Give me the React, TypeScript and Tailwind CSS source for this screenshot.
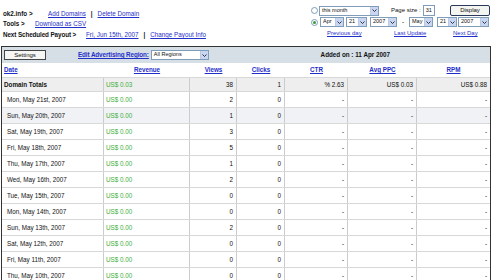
import React from "react";

const ROWS: [string, number][] = [
  ["Mon, May 21st, 2007", 2],
  ["Sun, May 20th, 2007", 1],
  ["Sat, May 19th, 2007", 3],
  ["Fri, May 18th, 2007", 5],
  ["Thu, May 17th, 2007", 1],
  ["Wed, May 16th, 2007", 2],
  ["Tue, May 15th, 2007", 0],
  ["Mon, May 14th, 2007", 0],
  ["Sun, May 13th, 2007", 2],
  ["Sat, May 12th, 2007", 0],
  ["Fri, May 11th, 2007", 0],
  ["Thu, May 10th, 2007", 0],
];

const COLS = "grid grid-cols-[102px_86px_47px_48px_63px_69px_73px]";

function Arrow() {
  return (
    <span className="flex h-full w-[8px] shrink-0 items-center justify-center border-l border-[#b9c9e6] bg-[#c8d6f2]">
      <svg width="5" height="3" viewBox="0 0 5 3">
        <path d="M0.5 0.5 L2.5 2.5 L4.5 0.5" stroke="#334" strokeWidth="1" fill="none" />
      </svg>
    </span>
  );
}

// fake XP-style dropdown
function Select({ label, className }: { label: string; className: string }) {
  return (
    <div className={`flex h-[10px] shrink-0 items-center justify-between overflow-hidden border border-[#7f9db9] bg-white pl-[2px] text-[5.5px] leading-none ${className}`}>
      <span>{label}</span>
      <Arrow />
    </div>
  );
}

function Radio({ checked }: { checked?: boolean }) {
  return (
    <span className="flex h-[7px] w-[7px] shrink-0 items-center justify-center rounded-full border border-[#7f9db9] bg-white">
      {checked && <span className="h-[3px] w-[3px] rounded-full bg-[#3a9a3a]" />}
    </span>
  );
}

function Link({ children, bold }: { children: React.ReactNode; bold?: boolean }) {
  return <span className={`text-[#1f2fc8] underline ${bold ? "font-bold" : ""}`}>{children}</span>;
}

export default function App() {
  return (
    <div className="h-[280px] w-[492px] overflow-hidden whitespace-nowrap bg-white font-['Liberation_Sans',Arial,sans-serif] text-[6.3px] text-[#111]">
      {/* Top bar */}
      <div className="flex h-[46px]">
        <div className="w-[311px] shrink-0 pl-[3px] pt-[9px] leading-[10px]">
          <div className="flex">
            <span className="w-[45px] shrink-0 font-bold">ok2.info &gt;</span>
            <Link>Add Domains</Link>
            <span className="px-[5px] font-bold">|</span>
            <Link>Delete Domain</Link>
          </div>
          <div className="flex">
            <span className="w-[32px] shrink-0 font-bold">Tools &gt;</span>
            <Link>Download as CSV</Link>
          </div>
          <div className="mt-px flex">
            <span className="w-[83px] shrink-0 font-bold tracking-[-0.1px]">Next Scheduled Payout &gt;</span>
            <Link>Fri, Jun 15th, 2007</Link>
            <span className="px-[5px] font-bold">|</span>
            <Link>Change Payout Info</Link>
          </div>
        </div>
        <div className="w-[179px] shrink-0 pt-[5px]">
          <div className="flex h-[11px] items-center">
            <Radio />
            <Select label="this month" className="ml-[1px] w-[60px]" />
            <span className="ml-[12px] shrink-0 text-[6px]">Page size :</span>
            <div className="ml-[2px] flex h-[11px] w-[12px] shrink-0 items-center border border-[#7f9db9] pl-[2px] text-[5.5px]">31</div>
            <div className="ml-auto flex h-[11px] w-[40px] shrink-0 items-center justify-center rounded-[2px] border border-[#2b3a5a] bg-[#f4f4f0] text-[6px]">Display</div>
          </div>
          <div className="mt-[1px] flex h-[10px] items-center">
            <Radio checked />
            <Select label="Apr" className="ml-[2px] w-[24px]" />
            <Select label="21" className="ml-[2px] w-[21px]" />
            <Select label="2007" className="ml-[3px] w-[27px]" />
            <span className="w-[12px] shrink-0 text-center">-</span>
            <Select label="May" className="w-[24px]" />
            <Select label="21" className="ml-[4px] w-[20px]" />
            <Select label="2007" className="ml-[1px] w-[31px]" />
          </div>
          <div className="mt-[2px] flex text-[6px] leading-[9px]">
            <span className="ml-[16px] w-[67px] shrink-0"><Link>Previous day</Link></span>
            <span className="w-[59px] shrink-0"><Link>Last Update</Link></span>
            <span className="shrink-0"><Link>Next Day</Link></span>
          </div>
        </div>
      </div>

      {/* Table */}
      <div className="ml-px w-[490px] border-x border-t border-[#333]">
        <div className="flex h-[16px] items-center bg-[#d6dee6]">
          <div className="ml-[2px] flex h-[10px] w-[42px] shrink-0 items-center justify-center border border-[#444] bg-[#f6f6f4] text-[6px]">Settings</div>
          <span className="ml-[32px] shrink-0 tracking-[-0.1px]"><Link bold>Edit Advertising Region:</Link></span>
          <Select label="All Regions" className="ml-[2px] w-[58px]" />
          <span className="ml-auto mr-[100px] font-bold">Added on : 11 Apr 2007</span>
        </div>
        <div className={`${COLS} h-[15px] items-center border-b border-[#d8d8d8] font-bold`}>
          <span className="pl-[2px]"><Link bold>Date</Link></span>
          <span className="text-center"><Link bold>Revenue</Link></span>
          <span className="text-center"><Link bold>Views</Link></span>
          <span className="text-center"><Link bold>Clicks</Link></span>
          <span className="text-center"><Link bold>CTR</Link></span>
          <span className="text-center"><Link bold>Avg PPC</Link></span>
          <span className="text-center"><Link bold>RPM</Link></span>
        </div>
        <div className={`${COLS} h-[14px] border-b border-[#d8d8d8] bg-[#eeeeee]`}>
          <span className="flex items-center border-r border-[#ccc] pl-[2px] font-bold">Domain Totals</span>
          <span className="flex items-center border-r border-[#ccc] pl-[2px] text-[#3cae3c]">US$ 0.03</span>
          <span className="flex items-center justify-end border-r border-[#ccc] pr-[3px]">38</span>
          <span className="flex items-center justify-end border-r border-[#ccc] pr-[3px]">1</span>
          <span className="flex items-center justify-end border-r border-[#ccc] pr-[3px]">% 2.63</span>
          <span className="flex items-center justify-end border-r border-[#ccc] pr-[3px]">US$ 0.03</span>
          <span className="flex items-center justify-end pr-[3px]">US$ 0.88</span>
        </div>
        {ROWS.map(([date, views], i) => (
          <div key={date} className={`${COLS} h-[16px] border-b border-[#d8d8d8] ${i === 1 ? "bg-[#f0f2f5]" : "bg-white"}`}>
            <span className="flex items-center border-r border-[#ccc] pl-[5px]">{date}</span>
            <span className="flex items-center border-r border-[#ccc] pl-[2px] text-[#3cae3c]">US$ 0.00</span>
            <span className="flex items-center justify-end border-r border-[#ccc] pr-[3px]">{views}</span>
            <span className="flex items-center justify-end border-r border-[#ccc] pr-[3px]">0</span>
            <span className="flex items-center justify-end border-r border-[#ccc] pr-[3px]">-</span>
            <span className="flex items-center justify-end border-r border-[#ccc] pr-[3px]">-</span>
            <span className="flex items-center justify-end pr-[3px]">-</span>
          </div>
        ))}
      </div>
    </div>
  );
}
